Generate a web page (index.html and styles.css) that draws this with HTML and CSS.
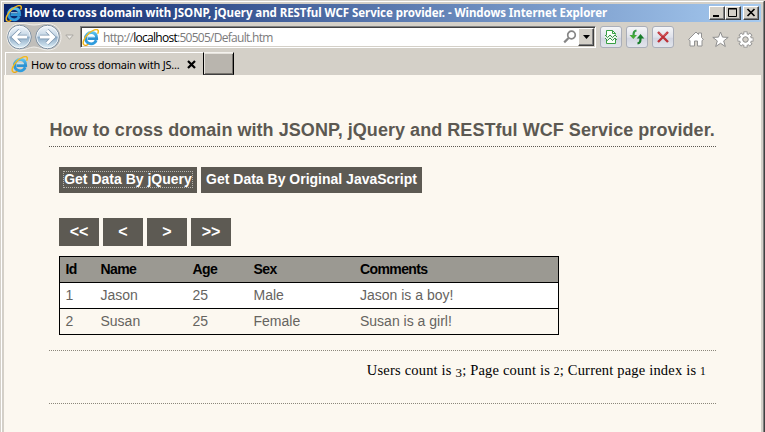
FILE: index.html
```html
<!DOCTYPE html>
<html lang="en">
<head>
<meta charset="utf-8">
<title>How to cross domain with JSONP, jQuery and RESTful WCF Service provider.</title>
<link rel="stylesheet" href="styles.css">
</head>
<body>
<svg class="defs" width="0" height="0">
  <defs>
    <linearGradient id="blue" x1="0" y1="0" x2="0" y2="1"><stop offset="0" stop-color="#58c3ee"/><stop offset=".5" stop-color="#2b91d2"/><stop offset="1" stop-color="#2f9edf"/></linearGradient>
    <linearGradient id="orb" x1="0" y1="0" x2="0" y2="1"><stop offset="0" stop-color="#f3f8fc"/><stop offset=".45" stop-color="#c5d6e5"/><stop offset=".52" stop-color="#8facc6"/><stop offset="1" stop-color="#e2f3fb"/></linearGradient>
    <symbol id="ie" viewBox="0 0 16 16">
      <path d="M13.4 10.6C12.4 13 10.8 14 8.6 14 5.5 14 3.3 11.8 3.3 8.7S5.6 3.3 8.7 3.3s5.1 2.1 5.1 5.7H5.2" fill="none" stroke="url(#blue)" stroke-width="2.7"/>
      <path d="M5.5 7.2h6.4" stroke="#bdeafa" stroke-width=".8"/>
      <path d="M2.3 15.2C-.5 13.7 2 8.1 6.2 4.2 10 .8 14.4-.5 15.2 1.5c.3.8.1 1.8-.5 3" fill="none" stroke="#f3b91c" stroke-width="1.4"/>
      <path d="M2.3 15.2c1 .5 2.5 0 3.7-.8" fill="none" stroke="#e7a511" stroke-width="1.3"/>
    </symbol>
  </defs>
</svg>
<div class="window">
  <header class="titlebar">
    <svg class="title-ie" width="17" height="17"><use href="#ie"/></svg>
    <span class="title">How to cross domain with JSONP, jQuery and RESTful WCF Service provider. - Windows Internet Explorer</span>
    <div class="controls">
      <span class="control"><svg width="14" height="12"><path d="M3 9h6" stroke="#000" stroke-width="2"/></svg></span>
      <span class="control"><svg width="14" height="12"><path d="M2.500 1.500h8v8h-8zM2 2h9" fill="none" stroke="#000"/></svg></span>
      <span class="control close"><svg width="14" height="12"><path d="M3.500 2l7 7M10.500 2l-7 7" stroke="#000" stroke-width="1.700"/></svg></span>
    </div>
  </header>
  <nav class="toolbar">
    <svg class="orbs" width="58" height="30" viewBox="0 0 58 30">
      <path d="M15 1.500C21 1 23 3 29 3s8-2 14-1.500C51 2 56 8 56 15s-5 13-13 13c-6 0-9-3-14-3s-8 3-14 3C7 28 2 22 2 15S7 2 15 1.500z" fill="#c0beba" stroke="#f0eeea"/>
      <g fill="url(#orb)" stroke="#788b9e"><circle cx="14.500" cy="15" r="11.700"/><circle cx="42.500" cy="15" r="11.700"/></g>
      <g fill="none" stroke="#fff" opacity=".8"><circle cx="14.500" cy="15" r="10.800"/><circle cx="42.500" cy="15" r="10.800"/></g>
      <g fill="none" stroke="#7893ad" stroke-width="4.400"><path d="M22 15H9M15 8.500L8.500 15l6.500 6.500M35 15h13M42 8.500l6.500 6.500-6.500 6.500"/></g>
      <g fill="none" stroke="#fff" stroke-width="3"><path d="M22 15H9M15 8.500L8.500 15l6.500 6.500M35 15h13M42 8.500l6.500 6.500-6.500 6.500"/></g>
    </svg>
    <svg class="history" width="9" height="7"><path d="M.8 1h7.400L4.500 5.300z" fill="#eceae6" stroke="#aaa8a3"/></svg>
    <div class="address">
      <svg width="17" height="17"><use href="#ie"/></svg>
      <span class="url">http://<b>localhost</b>:50505/Default.htm</span>
      <svg class="search" width="14" height="14" viewBox="0 0 14 14"><circle cx="8.500" cy="5" r="3.800" fill="#fff" stroke="#858585" stroke-width="1.700"/><path d="M5.600 8L1.200 12.400" stroke="#858585" stroke-width="2.200"/></svg>
      <span class="drop"><svg width="7" height="4"><path d="M0 0h7L3.500 4z"/></svg></span>
    </div>
    <div class="actions">
      <span class="action"><svg width="14" height="16" viewBox="0 0 14 16"><path d="M2.500 14.500v-13h6l3 3v10z" fill="#fafffa" stroke="#38a044"/><path d="M8.500 1.500v3h3" fill="none" stroke="#38a044"/><path d="M1 7l2.500 2.500L6 7l2.500 2.500L11 7l2 2" fill="none" stroke="#e8f5e8" stroke-width="3"/><path d="M1 6l2.500 2.500L6 6l2.500 2.500L11 6l2 2M1 9l2.500 2.500L6 9l2.500 2.500L11 9l2 2" fill="none" stroke="#258738" stroke-width=".9"/></svg></span>
      <span class="action"><svg width="16" height="16" viewBox="0 0 16 16"><path d="M7.500 1.500C5 2 4.500 3 4.500 7" fill="none" stroke="#349943" stroke-width="2.200"/><path d="M.5 6H8L4.300 10z" fill="#43aa35"/><path d="M8.500 14.500c2.500-.5 3-1.500 3-5.500" fill="none" stroke="#187d2b" stroke-width="2.200"/><path d="M7.800 9.500h7.500L11.500 5z" fill="#187d2b"/></svg></span>
      <span class="action"><svg width="14" height="14" viewBox="0 0 14 14"><path d="M2 2l10 10M12 2L2 12" stroke="#bd3037" stroke-width="2.400"/><path d="M3 2.500l3.500 3.500M11 2.500L7.500 6" stroke="#df7376"/></svg></span>
    </div>
    <div class="tools">
      <svg width="16" height="16" viewBox="0 0 16 16"><path d="M8 1l2.500 2.500V2h3v4.500l2 2-1.500 1V15H9.500v-5h-3v5H2V9.500l-1.500-1z" fill="#fff" stroke="#929292"/></svg>
      <svg width="17" height="17" viewBox="0 0 17 17"><path d="M8.500 1l2 5.100 5.700.3-4.500 3.500 1.600 5.600-4.800-3.200-4.800 3.200 1.600-5.600L.8 6.400l5.700-.3z" fill="#fff" stroke="#8e8e8e"/></svg>
      <svg width="17" height="17" viewBox="0 0 17 17"><g stroke="#8c8c8c" stroke-width="4"><path d="M8.500.6v15.800M.6 8.500h15.800M2.900 2.900l11.200 11.200M14.100 2.900L2.900 14.100"/></g><circle cx="8.500" cy="8.500" r="6.200" fill="#8c8c8c"/><g stroke="#fff" stroke-width="2.400"><path d="M8.500 1.300v14.400M1.300 8.500h14.400M3.400 3.400l10.200 10.200M13.600 3.400L3.400 13.600"/></g><circle cx="8.500" cy="8.500" r="4.300" fill="#d4d0c8" stroke="#fff" stroke-width="2.400"/><circle cx="8.500" cy="8.500" r="2.700" fill="#d4d0c8" stroke="#929292"/></svg>
    </div>
  </nav>
  <div class="tabs">
    <div class="tab"><svg width="17" height="17"><use href="#ie"/></svg><span class="tab-title">How to cross domain with JS...</span><svg class="tab-close" width="9" height="9"><path d="M1 1l7 7M8 1L1 8" stroke="#000" stroke-width="2.200"/></svg></div>
    <div class="new-tab"></div>
  </div>
  <main class="page">
    <h1><span>How to cross domain with JSONP, jQuery and RESTful WCF Service provider.</span></h1>
    <div class="row"><button class="focused"><span>Get Data By jQuery</span></button><button class="second">Get Data By Original JavaScript</button></div>
    <div class="row pager"><button>&lt;&lt;</button><button>&lt;</button><button>&gt;</button><button>&gt;&gt;</button></div>
    <div class="grid" role="table">
      <div class="record head" role="row"><span>Id</span><span>Name</span><span>Age</span><span>Sex</span><span>Comments</span></div>
      <div class="record odd" role="row"><span>1</span><span>Jason</span><span>25</span><span>Male</span><span>Jason is a boy!</span></div>
      <div class="record" role="row"><span>2</span><span>Susan</span><span>25</span><span>Female</span><span>Susan is a girl!</span></div>
    </div>
    <footer><span class="summary">Users count is <i class="low">3</i>; Page count is <i>2</i>; Current page index is <i>1</i></span></footer>
  </main>
</div>
</body>
</html>
```
FILE: styles.css
```css
* { box-sizing: border-box; }
body { margin: 0; background: #d4d0c8; overflow: hidden; font-family: "Liberation Sans", Arial, sans-serif; }
svg { display: block; flex: none; }
.defs { position: absolute; }
.window {
  height: 432px; padding: 2px 2px 0 2px;
  border-top: 1px solid #fff; border-left: 1px solid #fff; border-right: 1px solid #808080;
  margin: 1px 1px 0; box-shadow: 1px 0 #404040;
}
.titlebar {
  display: flex; align-items: center; height: 18px; padding: 0 2px 0 1px;
  background: linear-gradient(90deg, #0a246a, #a6caf0);
}
.title { margin-left: 2px; color: #fff; font: bold 11.5px/18px "Noto Sans", sans-serif; letter-spacing: -.058px; white-space: nowrap; }
.controls { display: flex; margin-left: auto; }
.control {
  width: 16px; height: 14px; background: #d4d0c8; border: 1px solid;
  border-color: #fff #404040 #404040 #fff; box-shadow: inset -1px -1px #808080;
}
.close { margin-left: 2px; }
.toolbar { display: flex; height: 30px; }
.orbs { margin: 0 0 0 1px; }
.history { margin: 12px 6px 0 2px; }
.address {
  display: flex; align-items: center; width: 516px; height: 22px; margin-top: 4px; padding-left: 1px;
  background: #fff; border: 1px solid; border-color: #808080 #fff #fff #808080;
  box-shadow: inset 1px 1px #404040, inset -1px -1px #d4d0c8;
}
.url { margin: 2px 0 0 4px; color: #7b7b7b; font: 12px/18px "Open Sans", "Noto Sans", sans-serif; letter-spacing: -.72px; white-space: nowrap; }
.url b { color: #000; font-weight: normal; }
.search { margin-left: auto; }
.drop {
  display: flex; align-items: center; justify-content: center; width: 16px; height: 18px; margin: 0 1px;
  background: #d4d0c8; border: 1px solid; border-color: #fff #404040 #404040 #fff; box-shadow: inset -1px -1px #808080;
}
.actions { display: flex; gap: 4px; margin: 4px 0 0 4px; }
.action {
  display: flex; align-items: center; justify-content: center; width: 22px; height: 22px;
  border: 1px solid #aaaeb9; border-radius: 3px; background: linear-gradient(#f5f6f8, #dfe1ea 52%, #d2d5e1 54%, #e2e5ec);
}
.tools { display: flex; align-items: center; gap: 8px; margin: 4px 0 0 14px; }
.tabs { display: flex; height: 23px; padding-left: 1px; }
.tab { display: flex; align-items: center; width: 198px; padding: 0 7px 0 5px; border-top: 1px solid #fff; border-left: 1px solid #fff; }
.tab-title { margin: 2px 0 0 3px; font: 11px/20px "Noto Sans", sans-serif; letter-spacing: -.2px; white-space: nowrap; }
.tab-close { margin-left: auto; }
.new-tab { width: 31px; background: #b9b5ae; border: 1px solid; border-color: #f4f2ee #000 #404040 #000; box-shadow: inset 1px 1px #e5e2dc, inset -1px -1px #77746e; }
.page { height: 357px; padding: 37px 45px 0; background: #fcf8f0; }
h1 {
  height: 35px; margin: 0; padding-top: 1px; color: #5c5952; font-size: 18px; line-height: 35px; letter-spacing: .048px; white-space: nowrap;
  background: repeating-linear-gradient(90deg, #5c5952 0 1px, transparent 1px 2px) bottom / 100% 1px no-repeat;
}
h1 span { margin-left: .5px; }
.row { display: flex; gap: 4px; margin: 20px 0 0 10px; }
button { height: 26px; padding: 0 0 2px; border: 0; background: #5d5a53; color: #fff; font: bold 14px/16px "Liberation Sans", Arial, sans-serif; white-space: nowrap; }
.focused { width: 138px; padding-bottom: 1px; }
.focused span { display: block; width: 128px; height: 15px; margin: 0 auto; line-height: 15px; outline: 1px dotted #b5b3ad; outline-offset: 0; }
.second { width: 221px; }
.pager { margin-top: 25px; }
.pager button { width: 40px; height: 28px; padding: 0; font-size: 16px; }
.grid { width: 500px; margin: 10px 0 15px 10px; border: 1px solid #000; border-top: 0; color: #66645f; font-size: 14px; }
.record { display: grid; grid-template-columns: 35px 92px 61px 106.500px 1fr; height: 26px; padding-left: 5.500px; border-top: 1px solid #000; line-height: 24px; }
.head { background: #9b9992; color: #000; font-weight: bold; font-size: 14px; letter-spacing: -.6px; }
.odd { background: #fff; }
footer {
  display: flex; justify-content: flex-end; height: 54px; padding: 8px 10px 0 0; font: 14.500px/24px "Liberation Serif", serif;
  background: repeating-linear-gradient(90deg, #8b877b 0 1px, transparent 1px 2px) top / 100% 1px no-repeat,
    repeating-linear-gradient(90deg, #8b877b 0 1px, transparent 1px 2px) bottom / 100% 1px no-repeat;
}
.summary { white-space: nowrap; letter-spacing: .19px; }
.summary i { font-style: normal; font-size: 11.500px; line-height: 1; }
.summary .low { font-size: 13px; position: relative; top: 2px; }
```
